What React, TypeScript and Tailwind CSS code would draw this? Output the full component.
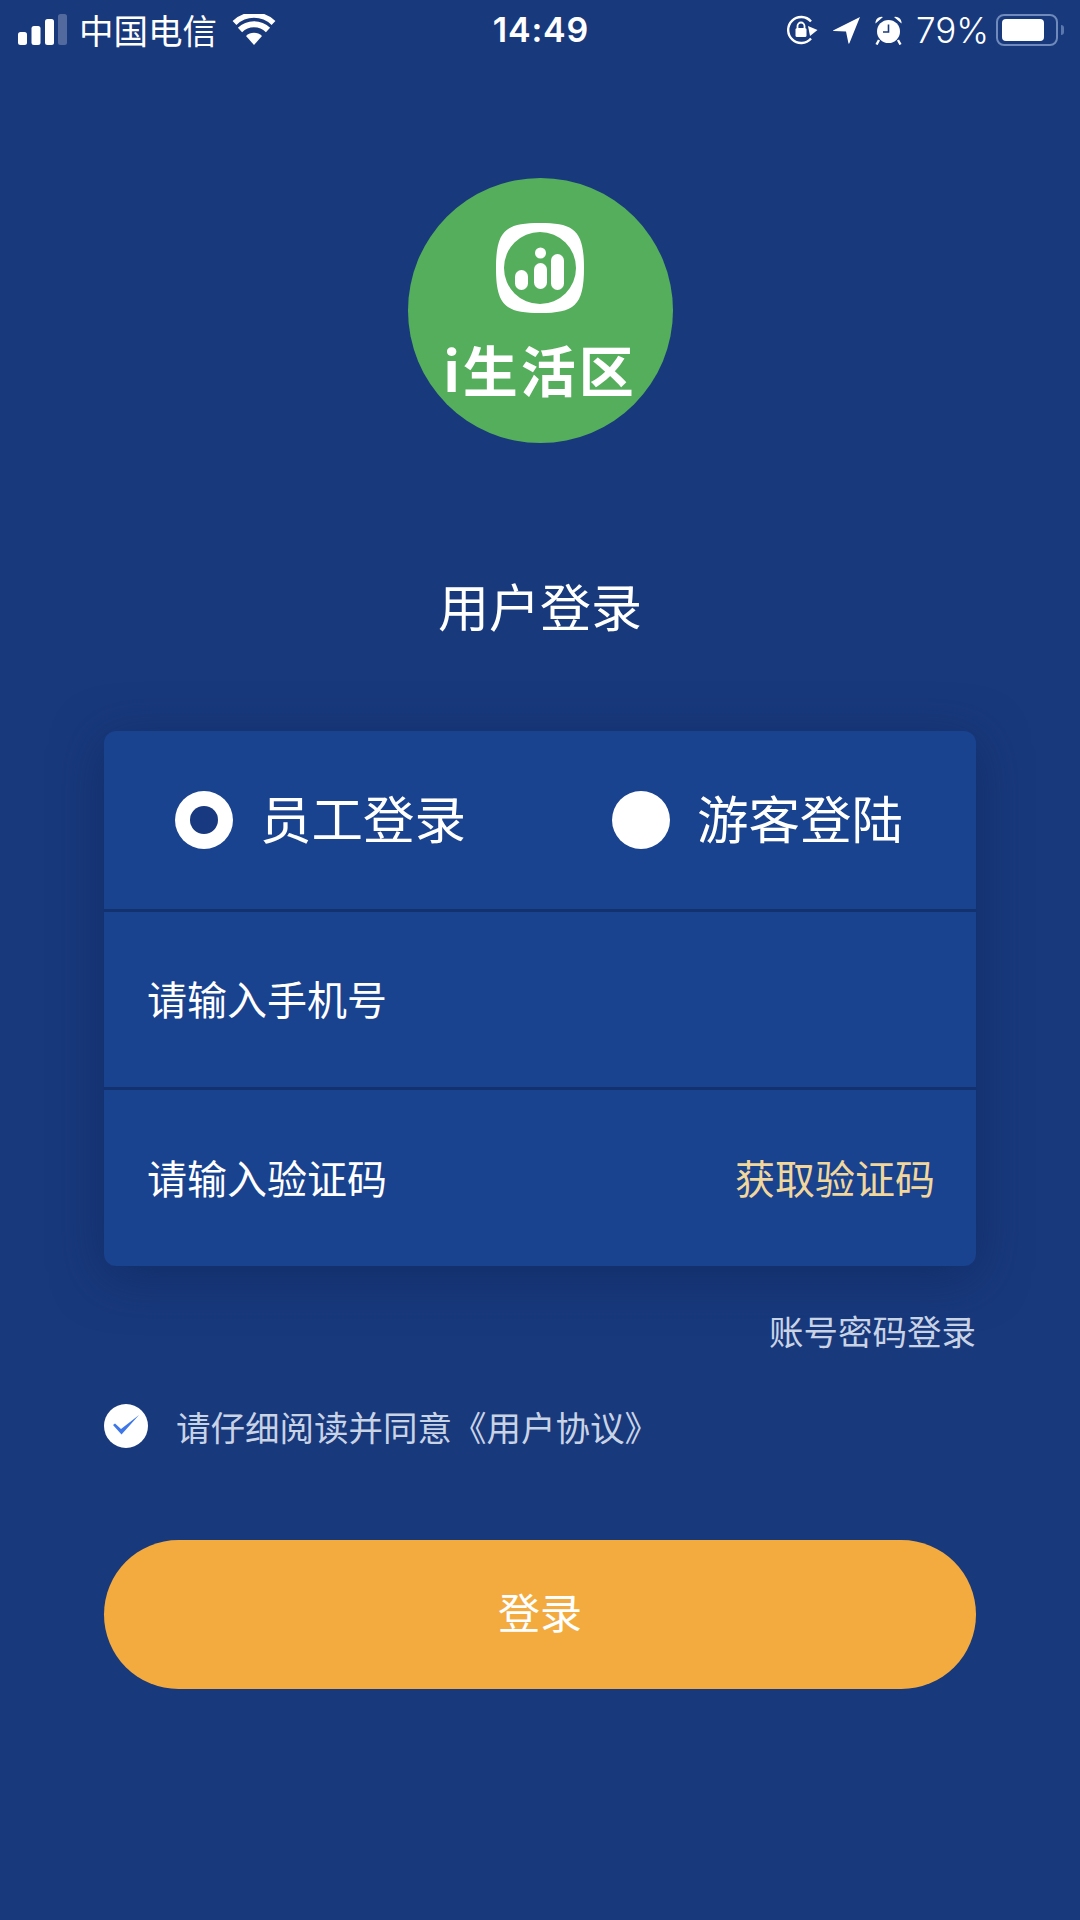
const cjk = "font-['Noto_Sans_CJK_SC','Noto_Sans',sans-serif]"

function SignalBars() {
  return (
    <svg width="50" height="32" viewBox="0 0 50 32" className="block">
      <rect x="0" y="18" width="9" height="13" rx="2.5" fill="#fff" />
      <rect x="13.5" y="12" width="9" height="19" rx="2.5" fill="#fff" />
      <rect x="27" y="5" width="9" height="26" rx="2.5" fill="#fff" />
      <rect x="40" y="0" width="9" height="31" rx="2.5" fill="#fff" fillOpacity="0.25" />
    </svg>
  )
}

function WifiIcon() {
  return (
    <svg width="44" height="32" viewBox="0 0 44 32" className="block">
      <path d="M22 31 L14 22 A11.5 11.5 0 0 1 30 22 Z" fill="#fff" />
      <path d="M8 16 A20 20 0 0 1 36 16" fill="none" stroke="#fff" strokeWidth="6" />
      <path d="M2.5 9 A28 28 0 0 1 41.5 9" fill="none" stroke="#fff" strokeWidth="5.5" />
    </svg>
  )
}

function OrientationLock() {
  return (
    <svg width="31" height="30" viewBox="0 0 31 30" className="block">
      <path d="M24 6.5 A13 13 0 1 0 24 23.5" fill="none" stroke="#fff" strokeWidth="2.4" />
      <path d="M21 11 L30.5 15 L23 21 Z" fill="#fff" />
      <rect x="8.5" y="13" width="11" height="9" rx="1.5" fill="#fff" />
      <path d="M10.5 13 V11 A3.5 3.5 0 0 1 17.5 11 V13" fill="none" stroke="#fff" strokeWidth="1.8" />
    </svg>
  )
}

function LocationArrow() {
  return (
    <svg width="27" height="27" viewBox="0 0 27 27" className="block">
      <path d="M27 0 L0 13.5 Q0 14 1 14 L13 14.5 L15.5 26.5 Q16 27 16.5 26 Z" fill="#fff" />
    </svg>
  )
}

function AlarmClock() {
  return (
    <svg width="27" height="29" viewBox="0 0 27 29" className="block">
      <circle cx="13.5" cy="15.5" r="11.5" fill="#fff" />
      <path d="M0.5 7.5 A6 6 0 0 1 8 1 Z M26.5 7.5 A6 6 0 0 0 19 1 Z" fill="#fff" />
      <path d="M4 24 L1.5 28.5 M23 24 L25.5 28.5" stroke="#fff" strokeWidth="2.4" />
      <path d="M13.5 8.5 V16 H8" fill="none" stroke="#1a3b80" strokeWidth="1.6" />
    </svg>
  )
}

function Battery() {
  return (
    <div className="flex items-center gap-[3px]">
      <div className="flex h-[32px] w-[62px] items-center rounded-[8px] border-2 border-[#6f8abb] pl-[4px]">
        <div className="h-[22px] w-[42px] rounded-[4px] bg-white" />
      </div>
      <div className="h-[10px] w-[3px] rounded-r-sm bg-[#5a78ae]" />
    </div>
  )
}

function StatusBar() {
  return (
    <div className="grid h-[60px] grid-cols-3 items-center pl-[18px] pr-[16px] text-white">
      <div className={`flex items-center ${cjk}`}>
        <SignalBars />
        <span className="ml-[11px] pb-[2px] text-[34.5px] leading-none">中国电信</span>
        <span className="ml-[15px]">
          <WifiIcon />
        </span>
      </div>
      <div className="text-center font-['Inter',sans-serif] text-[34px] font-semibold leading-none tracking-[0.8px]">
        14:49
      </div>
      <div className="flex items-center justify-end">
        <OrientationLock />
        <span className="ml-[15px]">
          <LocationArrow />
        </span>
        <span className="ml-[15px]">
          <AlarmClock />
        </span>
        <span className="ml-[14px] mr-[7px] font-['Inter',sans-serif] text-[35px] font-light leading-none">79%</span>
        <Battery />
      </div>
    </div>
  )
}

function Logo() {
  return (
    <div className="flex h-[265px] w-[265px] flex-col items-center rounded-full bg-[#55ae5b] pt-[44px]">
      <svg width="90" height="92" viewBox="0 0 90 92" className="block">
        <path
          fillRule="evenodd"
          d="M45 1 C79 1 89 8 89 46 C89 84 79 91 45 91 C11 91 1 84 1 46 C1 8 11 1 45 1 Z M45 10 A36 36 0 1 0 45 82 A36 36 0 1 0 45 10 Z"
          fill="#fff"
        />
        <rect x="20" y="48" width="13" height="20" rx="6.5" fill="#fff" />
        <rect x="39" y="41" width="13" height="26" rx="6.5" fill="#fff" />
        <circle cx="45.5" cy="31" r="5.5" fill="#fff" />
        <rect x="56" y="32" width="13" height="36" rx="6.5" fill="#fff" />
      </svg>
      <div className={`mt-[21px] text-[55px] font-bold leading-[66px] tracking-[3px] text-white ${cjk}`}>i生活区</div>
    </div>
  )
}

function RadioOption({ label, selected }: { label: string; selected: boolean }) {
  return (
    <div className="flex items-center gap-[27px]">
      <div className="flex h-[58px] w-[58px] items-center justify-center rounded-full bg-white">
        {selected && <div className="h-[28px] w-[28px] rounded-full bg-[#18397f]" />}
      </div>
      <span className="pb-[6px] text-[51.5px] leading-none text-white">{label}</span>
    </div>
  )
}

export default function App() {
  return (
    <div className={`flex min-h-[1920px] w-[1080px] flex-col bg-[#18397c] ${cjk}`}>
      <StatusBar />

      <div className="mt-[118px] flex justify-center">
        <Logo />
      </div>

      <h1 className="mt-[132px] pb-[4px] text-center text-[51px] font-normal leading-[60px] text-white">用户登录</h1>

      {/* Login form card */}
      <div className="mx-[104px] mt-[92px] overflow-hidden rounded-[12px] bg-[#19428f] shadow-[0_10px_50px_rgba(15,35,85,0.55)]">
        <div className="flex h-[181px] items-center border-b-[3px] border-[#13306f] pl-[71px]">
          <div className="w-[437px]">
            <RadioOption label="员工登录" selected />
          </div>
          <RadioOption label="游客登陆" selected={false} />
        </div>
        <div className="flex h-[178px] items-center border-b-[3px] border-[#13306f] pb-[4px] pl-[43px] pr-[44px] text-[40px] text-white">
          请输入手机号
        </div>
        <div className="flex h-[176px] items-center justify-between pb-[2px] pl-[43px] pr-[41px] text-[40px]">
          <span className="text-white">请输入验证码</span>
          <span className="text-[#f2d79c]">获取验证码</span>
        </div>
      </div>

      <div className="mx-[104px] mt-[43px] text-right text-[34.5px] leading-[42px] text-[#c9d3e6]">账号密码登录</div>

      <div className="mx-[104px] mt-[53px] flex items-center">
        <div className="h-[44px] w-[44px] rounded-full bg-white">
          <svg width="44" height="44" viewBox="0 0 44 44" className="block">
            <path d="M9 21 L11 19.5 L17 25 L35 11 L17.5 30.5 Z" fill="#3f77e8" />
          </svg>
        </div>
        <span className="ml-[28px] text-[34.5px] leading-[40px] text-[#c9d3e6]">请仔细阅读并同意《用户协议》</span>
      </div>

      <button className="mx-[104px] mt-[92px] h-[149px] rounded-full bg-[#f3ab3f] pb-[8px] text-[42px] text-white">登录</button>
    </div>
  )
}
